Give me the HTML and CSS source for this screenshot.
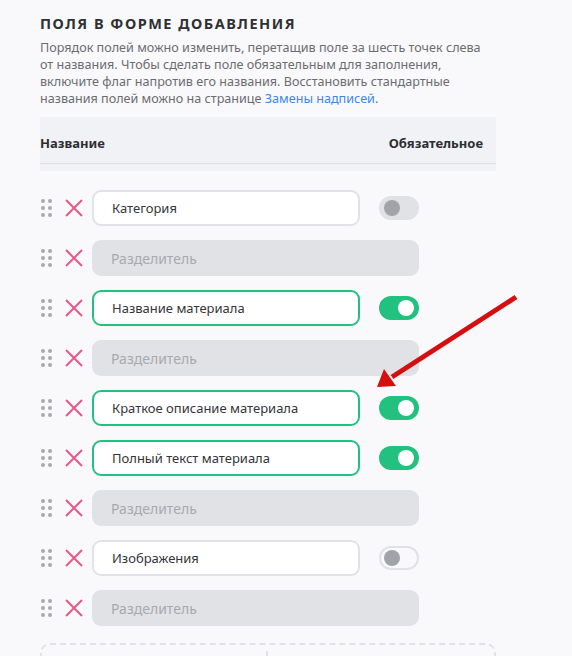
FILE: index.html
```html
<!DOCTYPE html>
<html lang="ru">
<head>
<meta charset="utf-8">
<link rel="stylesheet" href="styles.css">
</head>
<body>
<div class="page">
  <h2 class="title">ПОЛЯ В ФОРМЕ ДОБАВЛЕНИЯ</h2>
  <p class="desc">Порядок полей можно изменить, перетащив поле за шесть точек слева от названия. Чтобы сделать поле обязательным для заполнения, включите флаг напротив его названия. Восстановить стандартные названия полей можно на странице <a class="link" href="#">Замены надписей</a>.</p>
  <div class="thead">
    <div class="thead-row"><span>Название</span><span>Обязательное</span></div>
  </div>
  <div class="rows">
    <div class="row">
      <span class="handle"><i></i><i></i><i></i><i></i><i></i><i></i></span>
      <svg class="del" viewBox="0 0 18 18"><path d="M1 1L17 17M17 1L1 17"/></svg>
      <div class="field">Категория</div>
      <span class="toggle"></span>
    </div>
    <div class="row">
      <span class="handle"><i></i><i></i><i></i><i></i><i></i><i></i></span>
      <svg class="del" viewBox="0 0 18 18"><path d="M1 1L17 17M17 1L1 17"/></svg>
      <div class="sep">Разделитель</div>
    </div>
    <div class="row">
      <span class="handle"><i></i><i></i><i></i><i></i><i></i><i></i></span>
      <svg class="del" viewBox="0 0 18 18"><path d="M1 1L17 17M17 1L1 17"/></svg>
      <div class="field on">Название материала</div>
      <span class="toggle on"></span>
    </div>
    <div class="row">
      <span class="handle"><i></i><i></i><i></i><i></i><i></i><i></i></span>
      <svg class="del" viewBox="0 0 18 18"><path d="M1 1L17 17M17 1L1 17"/></svg>
      <div class="sep">Разделитель</div>
    </div>
    <div class="row">
      <span class="handle"><i></i><i></i><i></i><i></i><i></i><i></i></span>
      <svg class="del" viewBox="0 0 18 18"><path d="M1 1L17 17M17 1L1 17"/></svg>
      <div class="field on">Краткое описание материала</div>
      <span class="toggle on"></span>
    </div>
    <div class="row">
      <span class="handle"><i></i><i></i><i></i><i></i><i></i><i></i></span>
      <svg class="del" viewBox="0 0 18 18"><path d="M1 1L17 17M17 1L1 17"/></svg>
      <div class="field on">Полный текст материала</div>
      <span class="toggle on"></span>
    </div>
    <div class="row">
      <span class="handle"><i></i><i></i><i></i><i></i><i></i><i></i></span>
      <svg class="del" viewBox="0 0 18 18"><path d="M1 1L17 17M17 1L1 17"/></svg>
      <div class="sep">Разделитель</div>
    </div>
    <div class="row">
      <span class="handle"><i></i><i></i><i></i><i></i><i></i><i></i></span>
      <svg class="del" viewBox="0 0 18 18"><path d="M1 1L17 17M17 1L1 17"/></svg>
      <div class="field">Изображения</div>
      <span class="toggle outline"></span>
    </div>
    <div class="row">
      <span class="handle"><i></i><i></i><i></i><i></i><i></i><i></i></span>
      <svg class="del" viewBox="0 0 18 18"><path d="M1 1L17 17M17 1L1 17"/></svg>
      <div class="sep">Разделитель</div>
    </div>
  </div>
  <div class="dropzone"><div class="dz-cell"></div><div class="dz-cell"></div></div>
</div>
<svg class="arrow" viewBox="0 0 572 656" width="572" height="656">
  <line x1="516" y1="297" x2="392" y2="377" stroke="#d50f0f" stroke-width="5" stroke-linecap="butt"/>
  <polygon points="377,387 384,369 396,386" fill="#d50f0f"/>
</svg>
</body>
</html>
```

FILE: styles.css
```css
html, body {
  margin: 0;
  padding: 0;
  background: #f9f9fb;
}
body {
  width: 572px;
  height: 656px;
  overflow: hidden;
  position: relative;
  font-family: "Noto Sans", "Open Sans", sans-serif;
  color: #333;
}
.page {
  padding: 12px 0 0 40px;
  width: 456px;
}
.title {
  margin: 0;
  font-size: 14.5px;
  font-weight: 700;
  letter-spacing: 1.5px;
  color: #2f3033;
  line-height: 22px;
}
.desc {
  margin: 5px 0 0;
  font-size: 12.6px;
  line-height: 17px;
  color: #6b6c70;
}
.link {
  display: inline-block;
  color: #3b87ef;
  text-decoration: none;
}
.thead {
  margin-top: 10px;
  background: #f1f2f5;
  height: 54px;
}
.thead-row {
  height: 47px;
  border-bottom: 1px solid #dfe0e4;
  display: flex;
  justify-content: space-between;
  align-items: center;
  padding: 6px 13px 0 0;
  box-sizing: border-box;
  font-size: 13px;
  font-weight: 700;
  color: #2d2e31;
}
.rows {
  margin-top: 19px;
  display: flex;
  flex-direction: column;
  gap: 14px;
}
.row {
  display: flex;
  align-items: center;
  height: 36px;
}
.handle {
  display: grid;
  grid-template-columns: 4px 4px;
  column-gap: 3px;
  row-gap: 3px;
  width: 12px;
  margin-left: 1px;
}
.handle i {
  display: block;
  width: 4px;
  height: 4px;
  border-radius: 50%;
  background: #a8a9ad;
}
.del {
  width: 18px;
  height: 18px;
  margin-left: 12px;
  flex: none;
}
.del path {
  stroke: #e9578a;
  stroke-width: 2;
  fill: none;
}
.field {
  margin-left: 9px;
  width: 268px;
  height: 36px;
  box-sizing: border-box;
  border: 2px solid #e1e2e6;
  border-radius: 9px;
  background: #fff;
  padding-left: 18px;
  display: flex;
  align-items: center;
  font-size: 13px;
  color: #343538;
}
.field.on {
  border-color: #22c17f;
}
.sep {
  margin-left: 9px;
  width: 327px;
  height: 36px;
  box-sizing: border-box;
  border-radius: 9px;
  background: #e1e2e6;
  padding-left: 19px;
  display: flex;
  align-items: center;
  font-size: 14px;
  color: #a8a9ae;
}
.toggle {
  margin-left: 19px;
  width: 40px;
  height: 24px;
  box-sizing: border-box;
  border-radius: 12px;
  background: #e1e2e6;
  position: relative;
  flex: none;
}
.toggle::after {
  content: "";
  position: absolute;
  left: 5px;
  top: 4px;
  width: 16px;
  height: 16px;
  border-radius: 50%;
  background: #a2a3a8;
}
.toggle.on {
  background: #22c17f;
}
.toggle.on::after {
  left: 19px;
  background: #fff;
}
.toggle.outline {
  background: #f9f9fb;
  border: 2px solid #e1e2e6;
}
.toggle.outline::after {
  left: 3px;
  top: 2px;
}
.dropzone {
  margin-top: 17px;
  height: 40px;
  border: 2px dashed #e1e2e6;
  border-radius: 10px;
  box-sizing: border-box;
  display: grid;
  grid-template-columns: 226px 1fr;
  padding-top: 6px;
}
.dz-cell:first-child {
  border-right: 2px solid #e1e2e6;
}
.arrow {
  position: absolute;
  left: 0;
  top: 0;
  pointer-events: none;
}
```
